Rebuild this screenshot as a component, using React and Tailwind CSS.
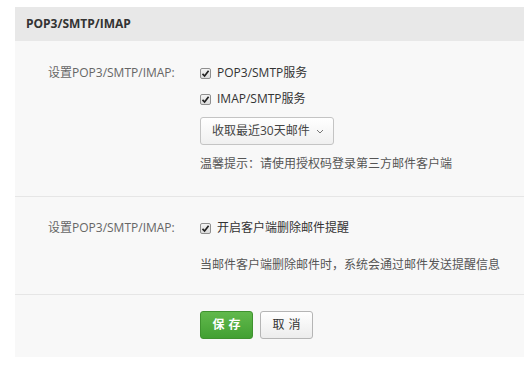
import React from 'react';

const font = { fontFamily: '"Open Sans", "Noto Sans CJK SC", sans-serif' };

function Check({ children }) {
	return (
		<label className="flex items-center h-[18px] text-[12px] text-[#333]">
			<span className="w-[11px] h-[11px] mr-[6px] rounded-[2px] border border-[#8f8f8f] bg-gradient-to-b from-[#f4f4f4] to-[#dcdcdc] flex items-center justify-center">
				<svg width="9" height="9" viewBox="0 0 9 9">
					<path d="M1.5 4.8 L3.6 7 L7.6 1.8" fill="none" stroke="#222" strokeWidth="1.7" />
				</svg>
			</span>
			{children}
		</label>
	);
}

function Row({ label, children, className }) {
	return (
		<div className={`flex pl-[33px] ${className}`}>
			<div className="w-[152px] h-[18px] flex items-center text-[12px] text-[#666]">{label}</div>
			<div className="flex flex-col">{children}</div>
		</div>
	);
}

export default function App() {
	return (
		<div className="bg-white w-[524px] h-[374px] pt-[7px] pl-[15px]" style={font}>
			<div className="bg-[#f8f8f8] h-[350px]">
				<div className="h-[34px] bg-[#e8e8e8] pl-[11px] flex items-center text-[12px] font-bold text-[#333]">
					POP3/SMTP/IMAP
				</div>

				<Row label="设置POP3/SMTP/IMAP:" className="pt-[23px] pb-[23px] border-b border-[#e6e6e6]">
					<Check>POP3/SMTP服务</Check>
					<div className="h-[8px]" />
					<Check>IMAP/SMTP服务</Check>
					<button className="mt-[9px] w-[134px] h-[28px] rounded-[3px] border border-[#c4c4c4] bg-gradient-to-b from-white to-[#f0f0f0] flex items-center pl-[11px] text-[12px] text-[#444]">
						收取最近30天邮件
						<svg className="ml-[6px]" width="8" height="5" viewBox="0 0 8 5">
							<path d="M1 1 L4 4 L7 1" fill="none" stroke="#777" strokeWidth="1" />
						</svg>
					</button>
					<div className="mt-[10px] h-[18px] flex items-center text-[12px] text-[#555]">
						温馨提示：请使用授权码登录第三方邮件客户端
					</div>
				</Row>

				<Row label="设置POP3/SMTP/IMAP:" className="pt-[22px] pb-[20px] border-b border-[#e6e6e6]">
					<Check>开启客户端删除邮件提醒</Check>
					<div className="mt-[19px] h-[18px] flex items-center text-[12px] text-[#555]">
						当邮件客户端删除邮件时，系统会通过邮件发送提醒信息
					</div>
				</Row>

				<div className="flex gap-[7px] pl-[185px] pt-[16px]">
					<button className="w-[53px] h-[28px] rounded-[3px] border border-[#3f922f] bg-gradient-to-b from-[#61b94c] to-[#42a032] text-white text-[12px] font-bold tracking-[4px] pl-[4px]">
						保存
					</button>
					<button className="w-[53px] h-[28px] rounded-[3px] border border-[#b5b5b5] bg-gradient-to-b from-white to-[#ececec] text-[#333] text-[12px] tracking-[4px] pl-[4px]">
						取消
					</button>
				</div>
			</div>
		</div>
	);
}
